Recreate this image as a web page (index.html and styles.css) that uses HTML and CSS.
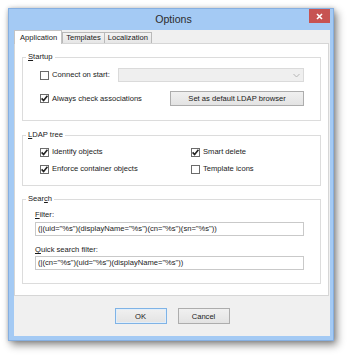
FILE: index.html
```html
<!DOCTYPE html>
<html>
<head>
<meta charset="utf-8">
<link rel="stylesheet" href="styles.css">
</head>
<body>
<div class="stage">
  <div class="window">
    <div class="titlebar">
      <span class="title">Options</span>
      <span class="close"><svg width="7" height="7" viewBox="0 0 7 7"><path d="M1 1L6 6M6 1L1 6" stroke="#fff" stroke-width="1.6"/></svg></span>
    </div>
    <div class="client">
      <div class="tabs">
        <span class="tab active">Application</span>
        <span class="tab">Templates</span>
        <span class="tab">Localization</span>
      </div>
      <div class="panel">
        <fieldset class="group">
          <legend><u>S</u>tartup</legend>
          <div class="body startup">
            <div class="row">
              <label class="chk"><span class="box"></span>Connect on start:</label>
              <span class="combo"><svg width="7" height="5" viewBox="0 0 7 5"><path d="M0.5 1L3.5 4L6.5 1" fill="none" stroke="#b5b5b5" stroke-width="1"/></svg></span>
            </div>
            <div class="row row2">
              <label class="chk"><span class="box"><svg width="9" height="9" viewBox="0 0 9 9"><path d="M1.6 4.4L3.6 6.6L7.4 1.8" fill="none" stroke="#222" stroke-width="1.6"/></svg></span>Always check associations</label>
              <span class="btn wide">Set as default LDAP browser</span>
            </div>
          </div>
        </fieldset>
        <fieldset class="group g2">
          <legend><u>L</u>DAP tree</legend>
          <div class="body ldap">
            <label class="chk"><span class="box"><svg width="9" height="9" viewBox="0 0 9 9"><path d="M1.6 4.4L3.6 6.6L7.4 1.8" fill="none" stroke="#222" stroke-width="1.6"/></svg></span>Identify objects</label>
            <label class="chk"><span class="box"><svg width="9" height="9" viewBox="0 0 9 9"><path d="M1.6 4.4L3.6 6.6L7.4 1.8" fill="none" stroke="#222" stroke-width="1.6"/></svg></span>Smart delete</label>
            <label class="chk"><span class="box"><svg width="9" height="9" viewBox="0 0 9 9"><path d="M1.6 4.4L3.6 6.6L7.4 1.8" fill="none" stroke="#222" stroke-width="1.6"/></svg></span>Enforce container objects</label>
            <label class="chk"><span class="box"></span>Template icons</label>
          </div>
        </fieldset>
        <fieldset class="group g3">
          <legend>Sear<u>c</u>h</legend>
          <div class="body search">
            <div class="lbl"><u>F</u>ilter:</div>
            <div class="input">(|(uid="%s")(displayName="%s")(cn="%s")(sn="%s"))</div>
            <div class="lbl lbl2"><u>Q</u>uick search filter:</div>
            <div class="input in2">(|(cn="%s")(uid="%s")(displayName="%s"))</div>
          </div>
        </fieldset>
      </div>
      <div class="footer">
        <span class="btn dlg default">OK</span>
        <span class="btn dlg">Cancel</span>
      </div>
    </div>
  </div>
</div>
</body>
</html>
```

FILE: styles.css
```css
html, body {
  margin: 0;
  padding: 0;
  background: #fff;
}
body {
  width: 350px;
  height: 356px;
  overflow: hidden;
  font-family: "Liberation Sans", Arial, sans-serif;
  font-size: 7.6px;
  color: #1a1a1a;
}
u { text-decoration: underline; text-underline-offset: 1px; }
.stage {
  padding: 8px 0 0 8px;
}
.window {
  box-sizing: border-box;
  width: 326px;
  height: 333px;
  background: #a4caf4;
  border: 1px solid #86afe0;
  padding: 0 3px 4px 5px;
  display: flex;
  flex-direction: column;
  box-shadow: 3px 4px 8px rgba(0,0,0,0.45), 0 0 4px rgba(0,0,0,0.2);
}
.titlebar {
  height: 21px;
  display: grid;
  grid-template-columns: 1fr auto 1fr;
  align-items: start;
}
.title {
  grid-column: 2;
  font-size: 10.6px;
  line-height: 21px;
  color: #2c2c2c;
  padding-left: 3px;
}
.close {
  grid-column: 3;
  justify-self: end;
  width: 21px;
  height: 14px;
  background: #c75352;
  display: flex;
  align-items: center;
  justify-content: center;
}
.close svg { display: block; }
.client {
  flex: 1;
  background: #f0f0f0;
  display: flex;
  flex-direction: column;
}
.tabs {
  height: 13px;
  display: flex;
  align-items: flex-end;
  position: relative;
  z-index: 1;
}
.tab {
  box-sizing: border-box;
  height: 11px;
  line-height: 10px;
  padding: 0 3px;
  border: 1px solid #b9b9b9;
  border-bottom: none;
  margin-left: -1px;
  background: linear-gradient(#f3f3f3, #e6e6e6);
  color: #1a1a1a;
}
.tab.active {
  height: 14px;
  margin-left: 0;
  margin-bottom: -1px;
  padding: 2px 4px 0 5px;
  background: #fff;
  border-color: #c4c4c4;
  margin-right: 1px;
}
.panel {
  box-sizing: border-box;
  height: 253px;
  margin-right: 1px;
  background: #fff;
  border: 1px solid #d6d6d6;
  padding: 8px 7px 10px 7px;
  display: flex;
  flex-direction: column;
}
.group {
  margin: 0;
  padding: 0;
  border: 1px solid #dcdcdc;
  min-width: 0;
}
.g2 { margin-top: 9px; }
.g3 { margin-top: 8px; }
.group legend {
  padding: 0 2px;
  margin-left: 3px;
  line-height: 10px;
}
.startup { padding: 6px 16px 14px 17px; }
.ldap {
  padding: 7px 16px 11px 17px;
  display: grid;
  grid-template-columns: 151px auto;
  row-gap: 7px;
}
.search { padding: 6px 16px 13px 12px; }
.row {
  display: flex;
  align-items: center;
  justify-content: space-between;
  height: 14px;
}
.row2 { margin-top: 9px; height: 15px; }
.chk {
  display: flex;
  align-items: center;
  height: 10px;
  line-height: 10px;
  white-space: nowrap;
}
.box {
  box-sizing: border-box;
  width: 9px;
  height: 9px;
  border: 1px solid #6b6b6b;
  background: #fff;
  margin-right: 3px;
  position: relative;
  flex: none;
}
.box svg {
  position: absolute;
  left: -1px;
  top: -1px;
  display: block;
}
.combo {
  box-sizing: border-box;
  width: 186px;
  height: 14px;
  background: #efefef;
  border: 1px solid #dadada;
  display: flex;
  align-items: center;
  justify-content: flex-end;
  padding-right: 3px;
}
.combo svg { display: block; }
.btn {
  box-sizing: border-box;
  display: flex;
  align-items: center;
  justify-content: center;
  border: 1px solid #adadad;
  background: linear-gradient(#f0f0f0, #e3e3e3);
  color: #1a1a1a;
}
.wide { width: 134px; height: 15px; }
.lbl {
  line-height: 10px;
  height: 10px;
}
.lbl2 { margin-top: 9px; }
.input {
  box-sizing: border-box;
  height: 14px;
  margin-top: 2px;
  border: 1px solid #c9c9c9;
  background: #fff;
  padding-left: 2px;
  line-height: 12px;
  white-space: nowrap;
  overflow: hidden;
}
.in2 { margin-top: 1px; }
.footer {
  flex: 1;
  display: flex;
  justify-content: center;
  align-items: flex-start;
  padding-top: 12px;
  gap: 11px;
}
.dlg {
  width: 52px;
  height: 16px;
}
.default {
  border-color: #7fb3e6;
  box-shadow: inset 0 0 0 1px #e1eefa;
}
```
